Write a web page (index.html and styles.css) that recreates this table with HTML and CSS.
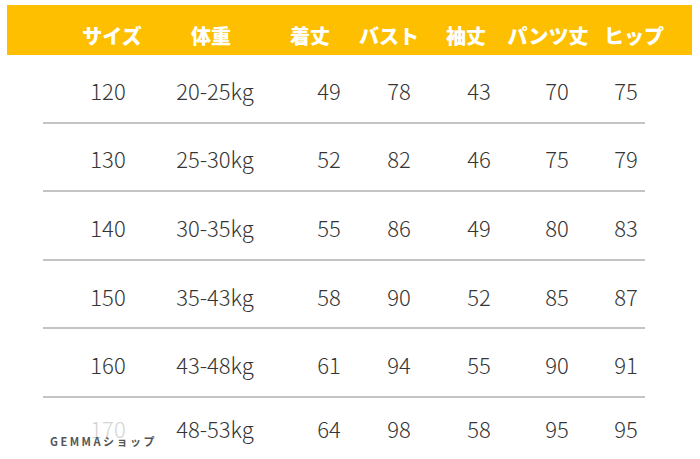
FILE: index.html
```html
<!DOCTYPE html>
<html lang="ja">
<head>
<meta charset="utf-8">
<link rel="stylesheet" href="styles.css">
</head>
<body>
<div class="page">
  <div class="head">
    <span class="h h1">サイズ</span>
    <span class="h h2">体重</span>
    <span class="h h3">着丈</span>
    <span class="h h4">バスト</span>
    <span class="h h5">袖丈</span>
    <span class="h h6">パンツ丈</span>
    <span class="h h7">ヒップ</span>
  </div>
  <div class="rows">
    <div class="row"><span class="c c1">120</span><span class="c c2">20-25kg</span><span class="c c3">49</span><span class="c c4">78</span><span class="c c5">43</span><span class="c c6">70</span><span class="c c7">75</span></div>
    <div class="row"><span class="c c1">130</span><span class="c c2">25-30kg</span><span class="c c3">52</span><span class="c c4">82</span><span class="c c5">46</span><span class="c c6">75</span><span class="c c7">79</span></div>
    <div class="row"><span class="c c1">140</span><span class="c c2">30-35kg</span><span class="c c3">55</span><span class="c c4">86</span><span class="c c5">49</span><span class="c c6">80</span><span class="c c7">83</span></div>
    <div class="row"><span class="c c1">150</span><span class="c c2">35-43kg</span><span class="c c3">58</span><span class="c c4">90</span><span class="c c5">52</span><span class="c c6">85</span><span class="c c7">87</span></div>
    <div class="row"><span class="c c1">160</span><span class="c c2">43-48kg</span><span class="c c3">61</span><span class="c c4">94</span><span class="c c5">55</span><span class="c c6">90</span><span class="c c7">91</span></div>
    <div class="row last"><span class="c c1 faint">170</span><span class="c c2">48-53kg</span><span class="c c3">64</span><span class="c c4">98</span><span class="c c5">58</span><span class="c c6">95</span><span class="c c7">95</span></div>
  </div>
  <div class="mark">GEMMAショップ</div>
</div>
</body>
</html>
```
FILE: styles.css
```css
html, body {
  margin: 0;
  padding: 0;
  background: #ffffff;
  overflow: hidden;
}
.page {
  position: relative;
  width: 700px;
  height: 459px;
  font-family: "Noto Sans CJK JP", "Noto Sans", sans-serif;
}
.head {
  margin: 5px 8px 0 7px;
  height: 50px;
  background: #fdbf00;
  display: flex;
  align-items: center;
  padding-top: 11px;
  box-sizing: border-box;
}
.h {
  display: block;
  flex-shrink: 0;
  width: 100px;
  text-align: center;
  color: #ffffff;
  font-weight: 900;
  font-size: 20px;
  line-height: 24px;
}
.h1 { margin-left: 55px; }
.h2 { margin-left: -1px; }
.h3 { margin-left: -1px; }
.h4 { margin-left: -21px; }
.h5 { margin-left: -23px; }
.h6 { margin-left: -18px; }
.h7 { margin-left: -14px; }
.rows {
  margin-left: 43px;
  width: 602px;
}
.row {
  height: 68.6px;
  box-sizing: border-box;
  border-bottom: 2px solid #c4c4c4;
  padding-top: 3px;
  display: flex;
  align-items: center;
}
.row.last {
  border-bottom: none;
  padding-top: 0;
  padding-bottom: 8px;
}
.c {
  display: block;
  flex-shrink: 0;
  width: 100px;
  text-align: center;
  color: #353535;
  font-size: 22px;
  line-height: 28px;
  font-weight: 300;
}
.c1 { margin-left: 15px; }
.c2 { margin-left: 7px; }
.c3 { margin-left: 14px; }
.c4 { margin-left: -30px; }
.c5 { margin-left: -20px; }
.c6 { margin-left: -22px; }
.c7 { margin-left: -31px; }
.faint {
  color: #d4d4d4;
}
.mark {
  position: absolute;
  left: 50px;
  top: 428px;
  font-size: 11px;
  font-weight: 700;
  color: #555555;
  letter-spacing: 2.5px;
  line-height: 16px;
}
```
